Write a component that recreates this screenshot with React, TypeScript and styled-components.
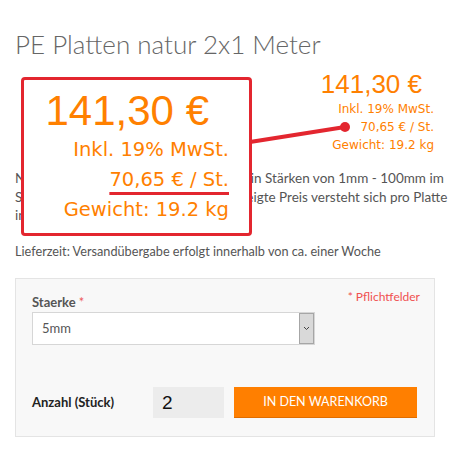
import React from 'react';
import styled, { createGlobalStyle } from 'styled-components';

const GlobalStyle = createGlobalStyle`
  html, body {
    margin: 0;
    padding: 0;
    background: #fff;
  }
  * {
    box-sizing: border-box;
  }
`;

const Page = styled.div`
  position: relative;
  width: 450px;
  height: 453px;
  padding: 28px 15px 0 15px;
  font-family: Lato, 'Open Sans', sans-serif;
  color: #555;
  overflow: hidden;
`;

const Title = styled.h1`
  margin: 0;
  font-size: 26px;
  line-height: 32px;
  font-weight: 300;
  color: #666;
`;

const PriceBlock = styled.div`
  display: flex;
  flex-direction: column;
  align-items: flex-end;
  margin-top: 8px;
  padding-right: 1px;
  height: 101px;
`;

const Price = styled.div<{ $big?: boolean }>`
  font-family: 'Liberation Sans', Arial, sans-serif;
  font-size: ${(p) => (p.$big ? '42px' : '26px')};
  line-height: ${(p) => (p.$big ? '48px' : '32px')};
  color: #ff8000;
  margin-right: ${(p) => (p.$big ? '20px' : '12px')};
`;

const PriceLine = styled.div<{ $big?: boolean }>`
  font-family: 'DejaVu Sans', Verdana, sans-serif;
  font-size: ${(p) => (p.$big ? '19.5px' : '12px')};
  line-height: ${(p) => (p.$big ? '30px' : '18px')};
  color: #ff8000;
`;

const Marked = styled.span`
  text-decoration: underline;
  text-decoration-color: #e3262f;
  text-decoration-thickness: 3px;
  text-underline-offset: 6px;
`;

const Description = styled.p`
  margin: 0;
  font-size: 13.5px;
  line-height: 18.5px;
  color: #555;
  white-space: nowrap;
`;

const Delivery = styled.p`
  margin: 17px 0 0 0;
  font-size: 12.7px;
  line-height: 18px;
  color: #555;
`;

const Panel = styled.div`
  margin-top: 18px;
  height: 159px;
  border: 1px solid #e4e4e4;
  background: #f8f8f8;
  padding: 12px 14px 0 16px;
  display: flex;
  flex-direction: column;
`;

const PanelHead = styled.div`
  display: flex;
  justify-content: space-between;
  align-items: flex-start;
`;

const Label = styled.label`
  display: block;
  font-size: 13px;
  font-weight: 700;
  color: #555;
  line-height: 18px;
  margin-top: 2px;
`;

const Star = styled.span`
  color: #ee5a5a;
  font-weight: 400;
`;

const Required = styled.span`
  margin-top: -3px;
  font-size: 12px;
  color: #f05050;
  line-height: 18px;
`;

const SelectBox = styled.div`
  margin-top: 1px;
  width: 283px;
  height: 33px;
  border: 1px solid #d6d6d6;
  background: #fff;
  display: flex;
  align-items: stretch;
  justify-content: space-between;
`;

const SelectValue = styled.span`
  font-size: 13px;
  line-height: 31px;
  padding-left: 9px;
  color: #555;
`;

const SelectButton = styled.span`
  width: 15px;
  background: #d9d9d9;
  border: 1px solid #a6a6a6;
  display: flex;
  align-items: center;
  justify-content: center;
`;

const OrderRow = styled.div`
  margin-top: 42px;
  display: flex;
  align-items: center;
`;

const QtyLabel = styled.span`
  width: 121px;
  font-size: 13px;
  font-weight: 700;
  color: #222;
`;

const QtyInput = styled.div`
  width: 71px;
  height: 31px;
  background: #ececec;
  font-family: 'Liberation Sans', Arial, sans-serif;
  font-size: 19px;
  line-height: 31px;
  color: #111;
  padding-left: 9px;
`;

const CartButton = styled.button`
  margin-left: 10px;
  width: 183px;
  height: 31px;
  border: none;
  border-bottom: 1px solid #e06d00;
  background: #ff7f00;
  color: #fff;
  font-family: Lato, 'Open Sans', sans-serif;
  font-size: 12.5px;
`;

const Callout = styled.div`
  position: absolute;
  left: 21px;
  top: 77px;
  width: 231px;
  height: 159px;
  border: 3px solid #e3262f;
  border-radius: 4px;
  background: #fff;
  padding: 7px 20px 0 0;
  display: flex;
  flex-direction: column;
  align-items: flex-end;
`;

const Connector = styled.svg`
  position: absolute;
  left: 0;
  top: 0;
  pointer-events: none;
`;

const Chevron = () => (
  <svg width="7" height="5" viewBox="0 0 7 5">
    <path d="M1 1l2.5 2.5L6 1" fill="none" stroke="#444" strokeWidth="1" />
  </svg>
);

const PriceInfo = ({ big }: { big?: boolean }) => (
  <>
    <Price $big={big}>141,30 €</Price>
    <PriceLine $big={big}>Inkl. 19% MwSt.</PriceLine>
    <PriceLine $big={big}>{big ? <Marked>70,65 € / St.</Marked> : '70,65 € / St.'}</PriceLine>
    <PriceLine $big={big}>Gewicht: 19.2 kg</PriceLine>
  </>
);

export default function App() {
  return (
    <Page>
      <GlobalStyle />
      <Title>PE Platten natur 2x1 Meter</Title>
      <PriceBlock>
        <PriceInfo />
      </PriceBlock>
      <Description>
        Naturfarbene PE Platten gibt es bei uns in Stärken von 1mm - 100mm im
        <br />
        Standardformat 2000x1000. Der angezeigte Preis versteht sich pro Platte
        <br />
        inkl. gesetzlicher MwSt.
      </Description>
      <Delivery>Lieferzeit: Versandübergabe erfolgt innerhalb von ca. einer Woche</Delivery>
      <Panel>
        <PanelHead>
          <div>
            <Label>
              Staerke <Star>*</Star>
            </Label>
            <SelectBox>
              <SelectValue>5mm</SelectValue>
              <SelectButton>
                <Chevron />
              </SelectButton>
            </SelectBox>
          </div>
          <Required>* Pflichtfelder</Required>
        </PanelHead>
        <OrderRow>
          <QtyLabel>Anzahl (Stück)</QtyLabel>
          <QtyInput>2</QtyInput>
          <CartButton>IN DEN WARENKORB</CartButton>
        </OrderRow>
      </Panel>

      <Callout>
        <PriceInfo big />
      </Callout>
      <Connector width="450" height="453">
        <line x1="250" y1="142" x2="345" y2="127" stroke="#e3262f" strokeWidth="4" />
        <circle cx="345" cy="127" r="5" fill="#e3262f" />
      </Connector>
    </Page>
  );
}
